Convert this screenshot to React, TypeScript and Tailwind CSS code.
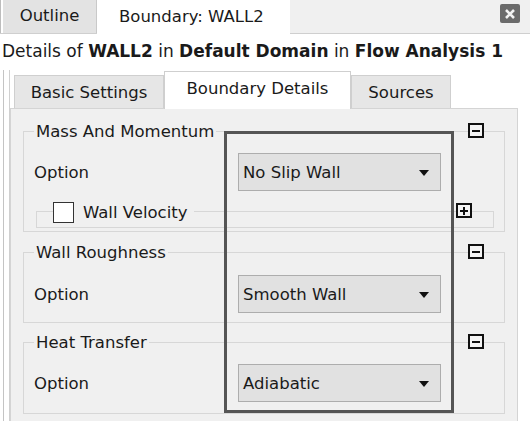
import React from "react";

const font = { fontFamily: '"DejaVu Sans", Verdana, sans-serif' };

function Box({ kind }: { kind: "minus" | "plus" }) {
  return (
    <div className="w-[16px] h-[15px] border-[2px] border-[#111] bg-[#f4f4f4] flex items-center justify-center">
      <div className="relative w-[8px] h-[8px]">
        <div className="absolute left-0 right-0 top-[3px] h-[2px] bg-[#111]" />
        {kind === "plus" && <div className="absolute top-0 bottom-0 left-[3px] w-[2px] bg-[#111]" />}
      </div>
    </div>
  );
}

function Dropdown({ value }: { value: string }) {
  return (
    <div className="w-[203px] h-[38px] bg-[#e1e1e1] border border-[#adadad] flex items-center justify-between pl-[4px] pr-[11px] pt-[2px] text-[16.5px] text-[#1a1a1a]">
      <span>{value}</span>
      <svg width="10" height="6" viewBox="0 0 10 6">
        <polygon points="0,0 10,0 5,6" fill="#111" />
      </svg>
    </div>
  );
}

function Group({
  title,
  children,
  className,
}: {
  title: string;
  children: React.ReactNode;
  className?: string;
}) {
  return (
    <div className={"relative border border-[#d7d7d7] mx-[12px] " + (className ?? "")}>
      <span className="absolute left-[10px] top-[-11px] bg-[#f0f0f0] px-[2px] text-[16.5px] leading-[22px] text-[#1a1a1a]">
        {title}
      </span>
      <div className="absolute right-[20px] top-[-9px]">
        <Box kind="minus" />
      </div>
      {children}
    </div>
  );
}

function OptionRow({ value }: { value: string }) {
  return (
    <div className="flex items-center">
      <div className="w-[214px] pl-[10px] pt-[3px] text-[16.5px] text-[#1a1a1a]">Option</div>
      <Dropdown value={value} />
    </div>
  );
}

export default function App() {
  return (
    <div className="w-[530px] h-[421px] bg-white relative overflow-hidden text-[#1a1a1a]" style={font}>
      {/* top tab bar */}
      <div className="flex h-[34px] bg-[#f0f0f0] border-b border-[#cfcfcf]">
        <div className="w-[3px] border-l border-[#bdbdbd] bg-white" />
        <div className="w-[94px] bg-[#e3e3e3] border-r border-[#c9c9c9] flex items-center justify-center text-[16.5px]">
          Outline
        </div>
        <div className="w-[193px] bg-white flex items-center pl-[22px] text-[16.5px] -mb-px">Boundary: WALL2</div>
        <div className="flex-1 flex items-start justify-end pr-[10px] pt-[4px]">
          <div className="w-[20px] h-[19px] rounded-[2px] bg-[#6b6b6b] flex items-center justify-center">
            <svg width="10" height="10" viewBox="0 0 10 10">
              <path d="M1 1 L9 9 M9 1 L1 9" stroke="#f2f2f2" strokeWidth="2.6" />
            </svg>
          </div>
        </div>
      </div>

      {/* details line */}
      <div className="h-[36px] pl-[2px] pt-[4px] text-[17px] leading-[26px] whitespace-nowrap">
        Details of <b>WALL2</b> in <b>Default Domain</b> in <b>Flow Analysis 1</b>
      </div>

      {/* left page lines */}
      <div className="flex">
        <div className="w-[10px] flex">
          <div className="w-[3px]" />
          <div className="w-px bg-[#c4c4c4]" />
          <div className="w-[5px]" />
          <div className="w-px bg-[#d0d0d0]" />
        </div>
        <div className="w-[508px]">
          {/* sub tabs */}
          <div className="flex items-end h-[38px] pl-[4px] relative z-10">
            <div className="w-[150px] h-[33px] bg-[#e6e6e6] border border-b-0 border-[#cfcfcf] flex items-center justify-center pt-[2px] text-[16.5px]">
              Basic Settings
            </div>
            <div className="w-[187px] h-[38px] bg-white border border-b-0 border-[#cfcfcf] flex items-center justify-center text-[16.5px] -mb-px pb-[2px]">
              Boundary Details
            </div>
            <div className="w-[100px] h-[33px] bg-[#e6e6e6] border border-b-0 border-[#cfcfcf] flex items-center justify-center pt-[2px] text-[16.5px]">
              Sources
            </div>
          </div>
          {/* panel */}
          <div className="bg-[#f0f0f0] border border-[#d4d4d4] h-[320px] pt-[22px] relative">
            <Group title="Mass And Momentum" className="h-[101px]">
              <div className="pt-[21px]">
                <OptionRow value="No Slip Wall" />
              </div>
              <div className="relative mt-[20px] ml-[12px] mr-[10px] h-[17px] border border-[#d7d7d7]">
                <div className="absolute left-[16px] top-[-12px] flex items-center bg-[#f0f0f0] pr-[6px]">
                  <div className="w-[21px] h-[21px] bg-white border border-[#333]" />
                  <span className="ml-[9px] pt-[2px] text-[16.5px] leading-[22px]">Wall Velocity</span>
                </div>
                <div className="absolute right-[21px] top-[-9px]">
                  <Box kind="plus" />
                </div>
              </div>
            </Group>
            <Group title="Wall Roughness" className="h-[71px] mt-[20px]">
              <div className="pt-[22px]">
                <OptionRow value="Smooth Wall" />
              </div>
            </Group>
            <Group title="Heat Transfer" className="h-[72px] mt-[19px]">
              <div className="pt-[21px]">
                <OptionRow value="Adiabatic" />
              </div>
            </Group>
          </div>
        </div>
      </div>

      {/* highlight rectangle */}
      <div className="absolute left-[224px] top-[131px] w-[230px] h-[282px] border-[3px] border-[#555555] pointer-events-none" />
    </div>
  );
}
